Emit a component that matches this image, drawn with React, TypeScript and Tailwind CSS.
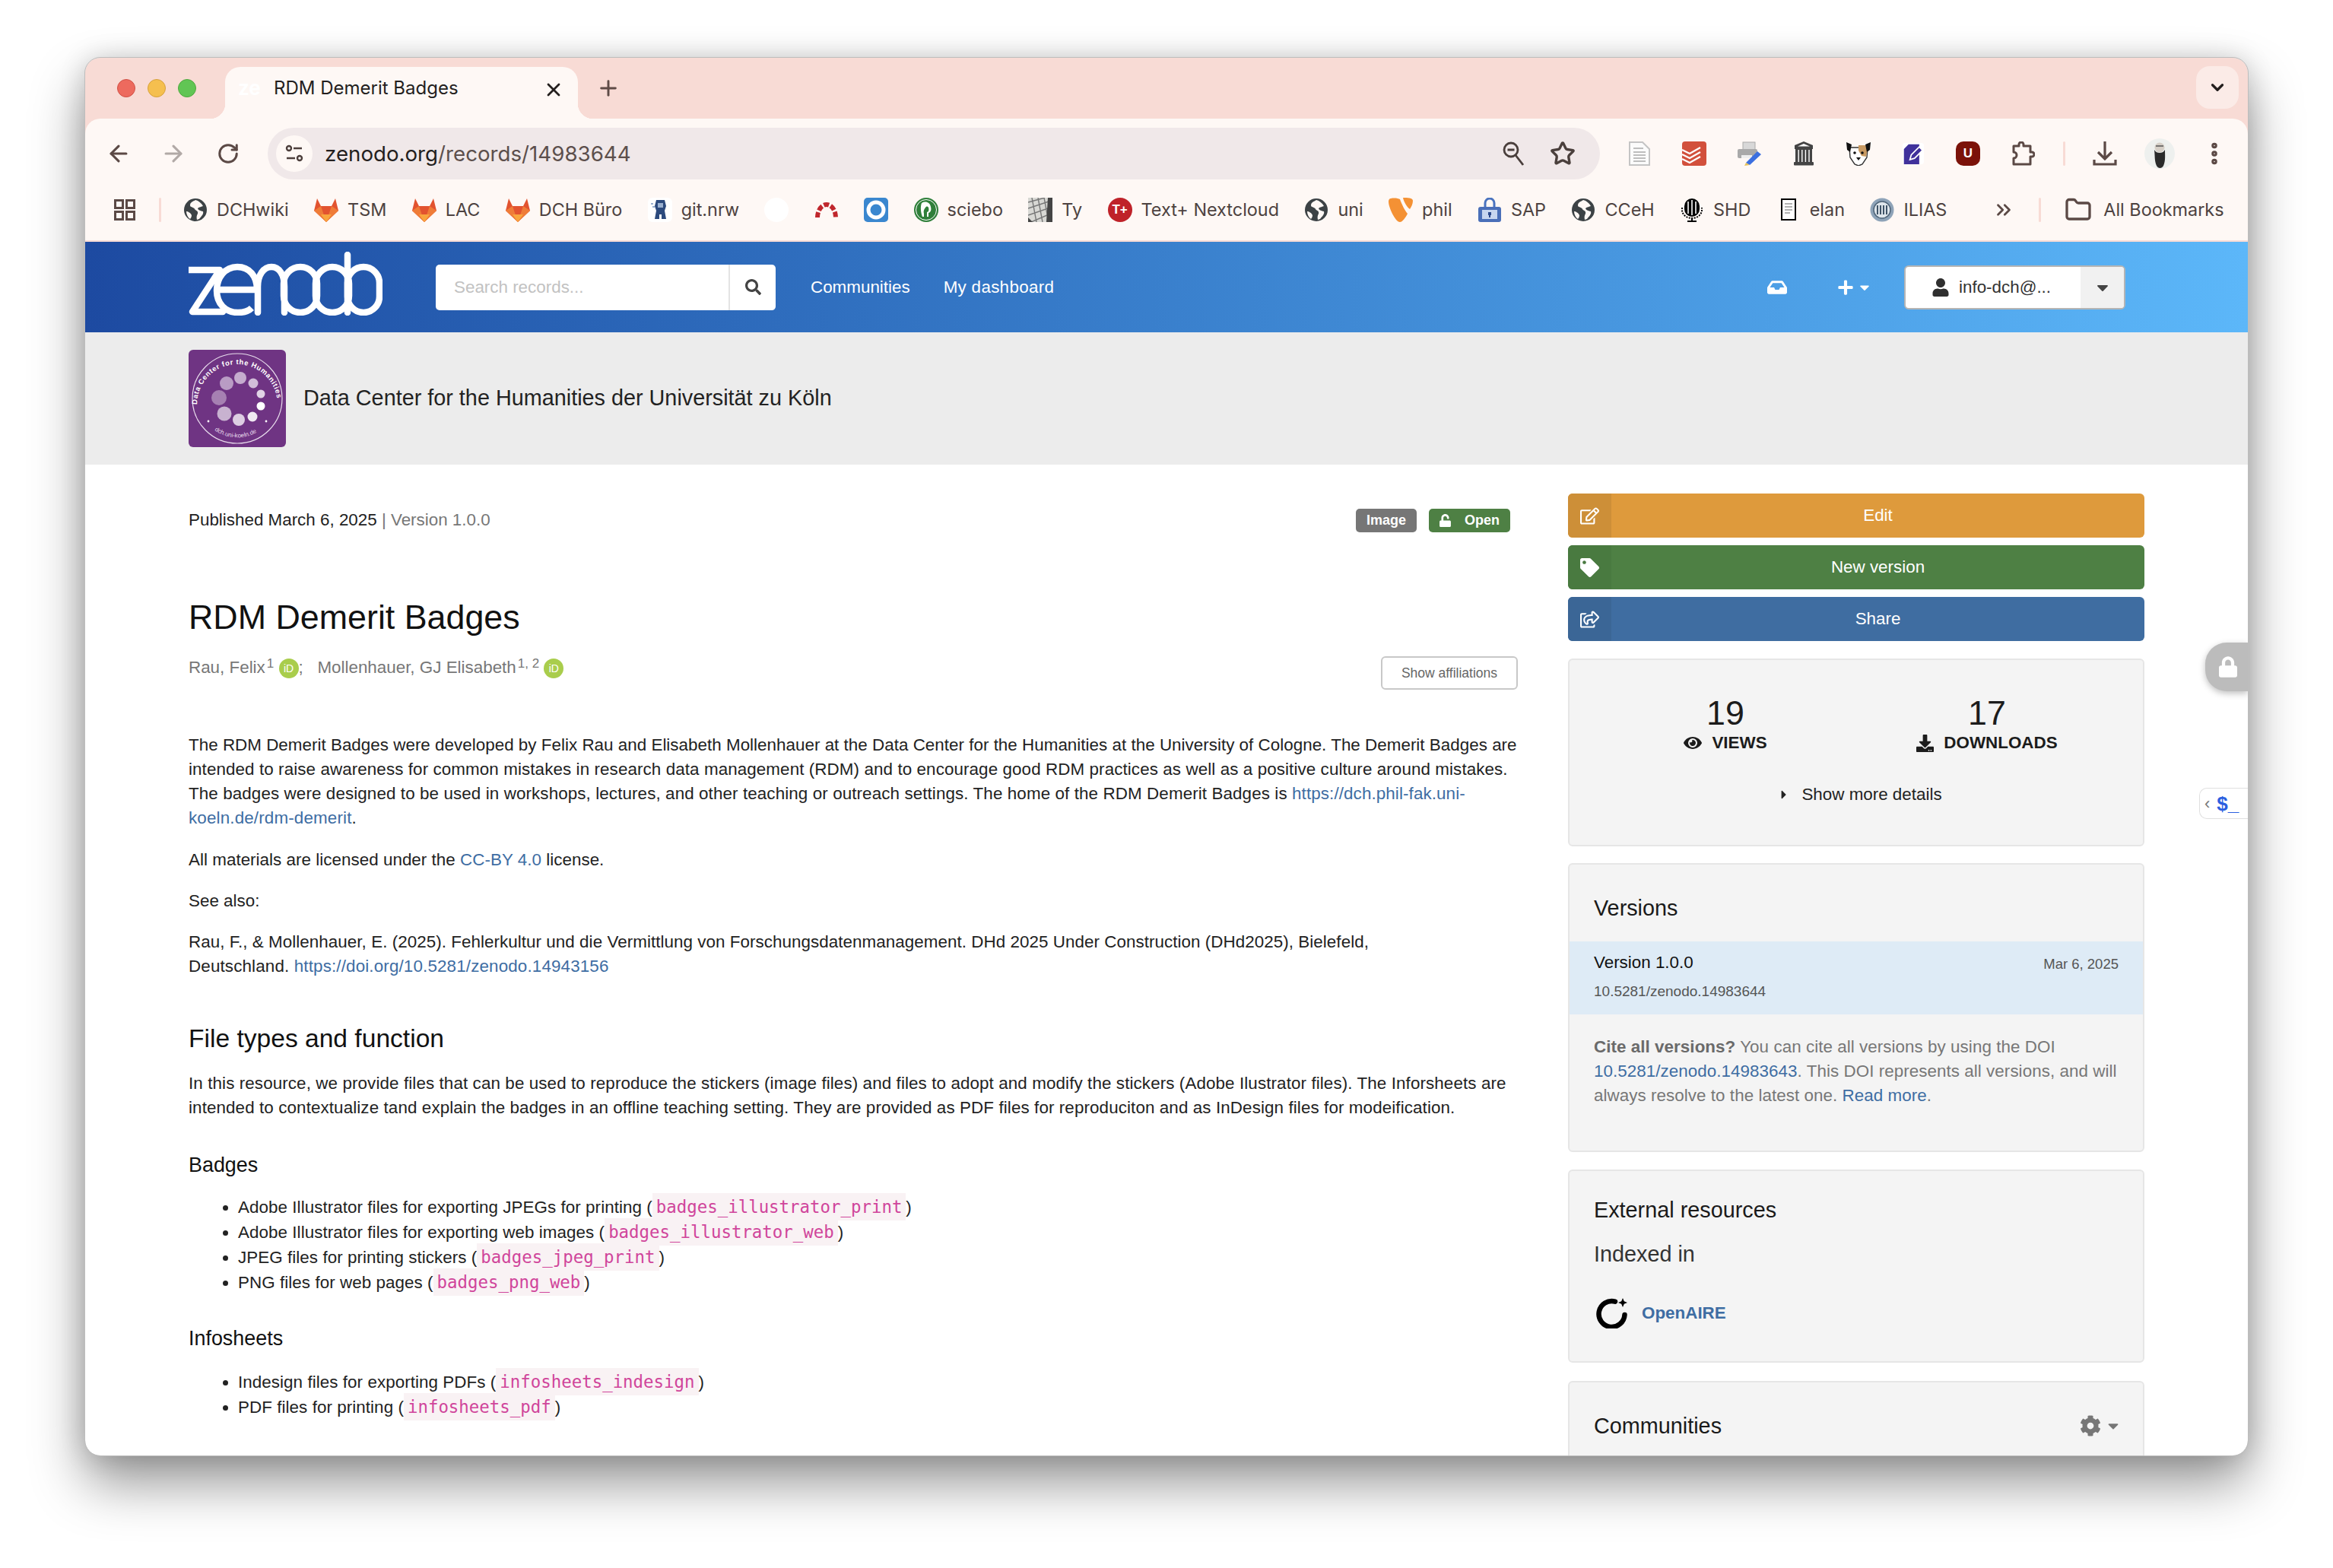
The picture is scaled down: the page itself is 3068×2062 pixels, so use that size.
import React from "react";
import { ArrowLeft, ArrowRight, RotateCw, Star, EllipsisVertical, ChevronDown, X, Plus, Folder, ChevronsRight } from "lucide-react";
import { FaRegEdit, FaTag, FaRegShareSquare, FaUnlock, FaEye, FaDownload, FaCaretRight, FaCog, FaCaretDown, FaUser, FaPlus, FaInbox, FaSearch, FaLock } from "react-icons/fa";

const Globe = () => (
  <svg viewBox="0 0 32 32" className="w-[32px] h-[32px]">
    <circle cx="16" cy="16" r="15" fill="#3c4245" />
    <path d="M16 3c-3 2-7 3-7 7 0 3 5 2 6 5 1 2 5 2 4 6-1 2-2 4-1 8l3-1c3-4 6-6 5-10-3-1-6-1-7-4 2-2 5-2 7-3-2-4-6-7-10-8zM4 18c2 0 6 2 7 5 0 2-1 4-2 5-3-2-5-6-5-10z" fill="#fef8f5" />
  </svg>
);
const Gitlab = () => (
  <svg viewBox="0 0 32 32" className="w-[32px] h-[32px]">
    <path d="M4 1l5 10h14l5-10 4 16-16 15L0 17z" fill="#e2532f" />
    <path d="M0 17l9-6 7 21z" fill="#ef7c38" />
    <path d="M32 17l-9-6-7 21z" fill="#ef7c38" />
    <path d="M9 22h14l-7 10z" fill="#f9a53d" />
  </svg>
);
const GitNrw = () => (
  <svg viewBox="0 0 32 32" className="w-[32px] h-[32px]">
    <rect width="32" height="32" rx="6" fill="#fff" />
    <path d="M11 3h11l2 8-2 6 2 11h-6v-6h-3v6H9l2-11-2-6z" fill="#2c4a7d" />
    <path d="M13 7h7v6h-7zM4 7h3v2H4zM6 11h3v2H6z" fill="#9ab0cf" />
  </svg>
);
const Arc = () => (
  <svg viewBox="0 0 32 32" className="w-[32px] h-[32px]">
    <path d="M4 26a12 17 0 0 1 24 0" fill="none" stroke="#c0272d" strokeWidth="6" strokeDasharray="7 2.5" />
  </svg>
);
const BlueO = () => (
  <svg viewBox="0 0 32 32" className="w-[32px] h-[32px]">
    <rect width="32" height="32" rx="5" fill="#3a87cf" />
    <circle cx="16" cy="16" r="10" fill="none" stroke="#fff" strokeWidth="5" />
  </svg>
);
const Sciebo = () => (
  <svg viewBox="0 0 32 32" className="w-[32px] h-[32px]">
    <circle cx="16" cy="16" r="16" fill="#2f7f3a" />
    <circle cx="16" cy="16" r="13.5" fill="none" stroke="#fff" strokeWidth="1" />
    <path d="M10 7c5-3 11-1 12 5 1 4 0 7-3 8v5h-2v-6c2 0 3-3 2-6-1-2-3-2-4 0-2 2-3 5-2 8v4h-2c-2-5-3-13-1-18z" fill="#fff" />
  </svg>
);
const Ty = () => (
  <svg viewBox="0 0 32 32" className="w-[32px] h-[32px]">
    <rect width="32" height="32" fill="#d8d8d4" />
    <path d="M0 6l22-6M0 14l30-10M0 23l32-11M4 32l28-12M5 0l6 32M13 0l6 32M21 0l6 32" stroke="#777" strokeWidth="1.4" />
    <path d="M26 0h6v32h-8z" fill="#444" />
    <path d="M0 26l6 6H0z" fill="#444" />
  </svg>
);
const TPlus = () => (
  <span className="w-[32px] h-[32px] rounded-full bg-[#bf2229] flex items-center justify-center text-white text-[17px] font-bold font-['Liberation_Sans',sans-serif] shrink-0">T+</span>
);
const Typo3 = () => (
  <svg viewBox="0 0 32 32" className="w-[32px] h-[32px]">
    <path d="M3 1c5-1 10 0 12 1 2 6 7 16 10 19-3 6-7 11-10 11C9 32 0 13 0 5c0-2 1-4 3-4zM19 0c6 0 13 0 13 4 0 4-2 8-4 11-3-2-8-9-9-15z" fill="#f49134" />
  </svg>
);
const Sap = () => (
  <svg viewBox="0 0 32 32" className="w-[32px] h-[32px]">
    <path d="M10 12V7a6 6 0 0 1 12 0v5" fill="none" stroke="#4a73bf" strokeWidth="3" />
    <rect x="1" y="12" width="30" height="20" rx="3" fill="#4a6fb8" />
    <rect x="6" y="16" width="20" height="12" fill="#c7d6ef" />
    <path d="M14 19h4v4h-1v3h-2v-3h-1z" fill="#2c4a8d" />
  </svg>
);
const Shd = () => (
  <svg viewBox="0 0 32 32" className="w-[32px] h-[32px]">
    <rect x="6" y="1" width="20" height="24" rx="10" fill="#000" />
    <path d="M11 5v16M16 3v20M21 5v16" stroke="#fff" strokeWidth="1.6" />
    <path d="M3 13v3a13 11 0 0 0 26 0v-3" fill="none" stroke="#000" strokeWidth="2" strokeDasharray="2 1.5" />
    <path d="M16 26v4M10 31h12" stroke="#000" strokeWidth="2" />
  </svg>
);
const Elan = () => (
  <svg viewBox="0 0 32 32" className="w-[32px] h-[32px]">
    <rect x="7" y="2" width="18" height="27" fill="#fff" stroke="#000" strokeWidth="2" />
    <path d="M11 8h10M11 12h10M11 16h10M11 20h7" stroke="#999" strokeWidth="1.6" />
  </svg>
);
const Ilias = () => (
  <svg viewBox="0 0 32 32" className="w-[32px] h-[32px]">
    <circle cx="16" cy="16" r="15.5" fill="#8ea3b8" />
    <circle cx="16" cy="16" r="11" fill="#dfe6ec" stroke="#4f6478" strokeWidth="1.5" />
    <path d="M10 10v12M14 10v12M18 10v12M22 10v12" stroke="#3f5367" strokeWidth="2" />
  </svg>
);

const Mark = ({ icon, label }: { icon: React.ReactNode; label?: string }) => (
  <div className="flex items-center gap-[12px] shrink-0">
    {icon}
    {label && <span className="text-[23.4px] text-[#4d4240] leading-[32px] whitespace-nowrap">{label}</span>}
  </div>
);

const ExtBox = ({ children }: { children: React.ReactNode }) => (
  <div className="w-[72px] h-[40px] flex items-center justify-center shrink-0">{children}</div>
);

const DocIcon = () => (
  <svg viewBox="0 0 28 32" className="w-[28px] h-[32px]">
    <path d="M1 1h17l9 9v21H1z" fill="#fbfbfb" stroke="#c4c4c4" strokeWidth="2" />
    <path d="M6 9h13M6 14h16M6 18h16M6 22h16M6 26h16" stroke="#aaa" strokeWidth="1.6" />
  </svg>
);
const Todoist = () => (
  <svg viewBox="0 0 32 32" className="w-[32px] h-[32px]">
    <rect width="32" height="32" rx="4" fill="#d2503c" />
    <path d="M0 11l10 5 14-8M0 17l10 5 14-8M0 23l10 5 14-8" fill="none" stroke="#fff" strokeWidth="2.4" />
  </svg>
);
const PrinterPen = () => (
  <svg viewBox="0 0 32 32" className="w-[32px] h-[32px]">
    <rect x="8" y="1" width="16" height="10" fill="#d8d8d8" stroke="#aaa" />
    <rect x="1" y="10" width="26" height="12" rx="2" fill="#a9a9a9" />
    <rect x="6" y="18" width="14" height="4" fill="#eee" />
    <path d="M12 28l15-15 5 4-15 14z" fill="#3b6fe0" />
    <path d="M12 28l5 3-7 1z" fill="#e6c25a" />
  </svg>
);
const Temple = () => (
  <svg viewBox="0 0 28 32" className="w-[28px] h-[32px]">
    <path d="M14 0L2 5v5h24V5z" fill="#444" />
    <path d="M14 3L6 6.5h16z" fill="#fff" />
    <rect x="3" y="10" width="22" height="17" fill="#444" />
    <path d="M8 11v16M12.6 11v16M17.2 11v16M21.8 11v16" stroke="#fff" strokeWidth="1.4" transform="translate(-0.8 0)" />
    <rect x="1" y="27" width="26" height="4.5" rx="1" fill="#444" />
  </svg>
);
const Dog = () => (
  <svg viewBox="0 0 32 32" className="w-[32px] h-[32px]">
    <path d="M4 8h24l-1 13-6 9-5 2-5-2-6-9z" fill="#fff" stroke="#333" strokeWidth="1.4" />
    <path d="M16 5h9l3 5-2 10-6-1-4-7z" fill="#c99a62" />
    <path d="M0 1l7 3-2 10-4-3zM32 1l-7 3 2 10 4-3z" fill="#111" />
    <circle cx="11" cy="15" r="1.8" fill="#111" />
    <circle cx="21" cy="15" r="1.8" fill="#111" />
    <path d="M13 21h6l-3 4z" fill="#111" />
  </svg>
);
const PenDoc = () => (
  <svg viewBox="0 0 32 32" className="w-[28px] h-[32px]">
    <rect width="32" height="32" rx="4" fill="#fff" />
    <path d="M9 2h16v30H2V9z" fill="#40319b" />
    <path d="M11 25l2-7L25 6l5 5-12 12z" fill="#40319b" stroke="#fff" strokeWidth="2" />
  </svg>
);
const UBlock = () => (
  <span className="w-[32px] h-[32px] bg-[#7b1209] text-white text-[17px] font-bold font-['Liberation_Sans',sans-serif] flex items-center justify-center rounded-[10px]">U</span>
);
const Avatar = () => (
  <svg viewBox="0 0 40 40" className="w-[40px] h-[40px]">
    <circle cx="20" cy="20" r="20" fill="#eef0ee" />
    <circle cx="20" cy="12" r="6.5" fill="#d6cfc7" />
    <path d="M13 15c1 8 0 14 3 21 2 4 7 4 9 0 3-7 2-13 2-21-2 3-4 4-7 4s-5-1-7-4z" fill="#2a2a2a" />
    <path d="M15 10h10" stroke="#555" strokeWidth="1.4" />
  </svg>
);
const ZoomGlass = () => (
  <svg viewBox="0 0 28 32" className="w-[28px] h-[32px]" fill="none" stroke="#4a3f3c" strokeWidth="2.8">
    <circle cx="11" cy="11" r="9" />
    <path d="M17 18l10 13M6.5 11h9" />
  </svg>
);
const PuzzleIcon = () => (
  <svg viewBox="0 0 32 32" className="w-[32px] h-[32px]" fill="none" stroke="#5b4945" strokeWidth="3" strokeLinejoin="round">
    <path d="M4 6h7V4a3 3 0 0 1 6 0v2h9v8h2a3 3 0 0 1 0 6h-2v10H4v-8a4 4 0 0 0 0-8z" />
  </svg>
);
const DownloadIcon = () => (
  <svg viewBox="0 0 32 32" className="w-[32px] h-[32px]" fill="none" stroke="#5b4945" strokeWidth="3.2">
    <path d="M16 0v23M7 14l9 9 9-9M2 24v6h28v-6" />
  </svg>
);

const ZenodoLogo = () => (
  <svg viewBox="0 0 255 84" className="w-[255px] h-[84px] shrink-0 -mt-[10px]" fill="none" stroke="#fff" strokeWidth="8.5">
    <path d="M1 24h40L5 79h40" strokeLinejoin="round" strokeLinecap="round" />
    <path d="M38 50h52c0-18-10-30-26-30s-27 14-27 31 11 29 28 29c8 0 14-2 18-6" />
    <path d="M91 80V46c0-16 8-26 18-26s17 10 17 26v34" strokeLinecap="round" />
    <rect x="125" y="20" width="44" height="60" rx="22" />
    <rect x="167" y="20" width="44" height="60" rx="22" />
    <path d="M209 4v76" strokeLinecap="round" />
    <rect x="209" y="20" width="42" height="60" rx="21" />
  </svg>
);

const DchLogo = () => (
  <svg viewBox="0 0 128 128" className="w-[128px] h-[128px] rounded-[6px] shrink-0">
    <rect width="128" height="128" fill="#6f3483" />
    <circle cx="64" cy="64" r="59" fill="none" stroke="#e8dcec" strokeWidth="1.2" />
    <defs>
      <path id="top-arc" d="M11 72a53 53 0 0 1 106 0" />
      <path id="bottom-arc" d="M24 96a51 51 0 0 0 80 0" />
    </defs>
    <text fontSize="9.4" fontWeight="700" fill="#fff" fontFamily="'Liberation Sans',sans-serif" textLength="158" lengthAdjust="spacing"><textPath href="#top-arc">Data Center for the Humanities</textPath></text>
    <text fontSize="8" fill="#e8dcec" fontFamily="'Liberation Sans',sans-serif"><textPath href="#bottom-arc" startOffset="14">dch.uni-koeln.de</textPath></text>
    <circle cx="40" cy="63" r="10" fill="#a680b2" />
    <circle cx="50" cy="44" r="9" fill="#b99cc4" />
    <circle cx="68" cy="37" r="8" fill="#c5acce" />
    <circle cx="85" cy="44" r="6.5" fill="#d1bdd8" />
    <circle cx="95" cy="58" r="5.5" fill="#e1d4e6" />
    <circle cx="95" cy="74" r="5.5" fill="#fff" />
    <circle cx="84" cy="88" r="6.5" fill="#f0e8f2" />
    <circle cx="66" cy="92" r="8" fill="#ddcde2" />
    <circle cx="47" cy="84" r="9.5" fill="#c8b2d0" />
    <circle cx="26" cy="94" r="1.4" fill="#fff" />
    <circle cx="102" cy="94" r="1.4" fill="#fff" />
  </svg>
);

const OpenAireLogo = () => (
  <svg viewBox="0 0 42 40" className="w-[42px] h-[40px] shrink-0 ml-[3px]">
    <path d="M25 4.6A17 17 0 1 0 37.5 22" fill="none" stroke="#000" strokeWidth="6.5" strokeLinecap="round" />
    <path d="M35 0l1.8 4.2L41 6l-4.2 1.8L35 12l-1.8-4.2L29 6l4.2-1.8z" fill="#000" />
  </svg>
);

const Orcid = () => (
  <span className="inline-flex w-[26px] h-[26px] rounded-full bg-[#a9cd4c] text-white text-[14px] items-center justify-center align-[1px] leading-none">iD</span>
);

const ActionBtn = ({ icon, label, main, side }: { icon: React.ReactNode; label: string; main: string; side: string }) => (
  <div className={`flex h-[58px] rounded-[6px] overflow-hidden text-white text-[22.4px] ${main}`}>
    <div className={`w-[57px] flex items-center justify-center text-[25px] ${side}`}>{icon}</div>
    <div className="flex-1 flex items-center justify-center">{label}</div>
  </div>
);

const Code = ({ children }: { children: React.ReactNode }) => (
  <code className="font-['DejaVu_Sans_Mono',monospace] text-[22.4px] tracking-normal bg-[#f9f2f4] text-[#d0459b] px-[5px] py-[5px]">{children}</code>
);

const Li = ({ children }: { children: React.ReactNode }) => (
  <li className="h-[33px] leading-[33px] list-disc tracking-[0.06px]">{children}</li>
);

const Link = ({ children }: { children: React.ReactNode }) => <span className="text-[#3e6da3]">{children}</span>;

const Card = ({ className, children }: { className: string; children: React.ReactNode }) => (
  <div className={`bg-[#f4f4f4] border-2 border-[#e6e6e6] rounded-[6px] ${className}`}>{children}</div>
);

export default function App() {
  return (
    <div className="w-[3068px] h-[2062px] bg-white pt-[76px] pl-[112px] overflow-hidden">
      <div className="relative w-[2844px] h-[1838px] rounded-[20px] overflow-hidden bg-white flex flex-col outline outline-1 outline-[#bdbdbd] shadow-[0_36px_70px_rgba(0,0,0,0.42),0_0_34px_rgba(0,0,0,0.16)]">
        {/* tab strip */}
        <div className="bg-[#f8dbd5] font-['Inter',sans-serif]">
          <div className="h-[80px] flex items-end">
            <div className="self-center flex gap-[16px] pl-[42px] -mt-[1px]">
              <span className="w-[24px] h-[24px] rounded-full bg-[#ed6a5e] border border-[#d05045]" />
              <span className="w-[24px] h-[24px] rounded-full bg-[#f5bf4f] border border-[#d6a13c]" />
              <span className="w-[24px] h-[24px] rounded-full bg-[#61c554] border border-[#4ea83f]" />
            </div>
            <div className="relative ml-[38px] w-[464px] h-[68px] bg-[#fef8f5] rounded-t-[20px] flex items-center pl-[17px] pb-[12px]">
              <span className="absolute -left-[20px] bottom-0 w-[20px] h-[20px] bg-[radial-gradient(circle_at_0_0,#f8dbd5_20px,#fef8f5_20.5px)]" />
              <span className="absolute -right-[20px] bottom-0 w-[20px] h-[20px] bg-[radial-gradient(circle_at_100%_0,#f8dbd5_20px,#fef8f5_20.5px)]" />
              <span className="w-[30px] text-[26px] text-white font-bold leading-none">ze</span>
              <span className="ml-[17px] text-[24px] leading-[32px] text-[#241f1e]">RDM Demerit Badges</span>
              <X className="absolute left-[418px] top-[16px] w-[28px] h-[28px] text-[#241f1e]" strokeWidth={2.4} />
            </div>
            <div className="self-center ml-[24px] text-[#5f4b47]"><Plus className="w-[32px] h-[32px]" strokeWidth={2.2} /></div>
            <div className="self-center ml-auto mr-[12px] mt-[-2px] w-[56px] h-[56px] rounded-[18px] bg-[#fbebe7] flex items-center justify-center">
              <ChevronDown className="w-[26px] h-[26px] text-[#241f1e]" strokeWidth={3} />
            </div>
          </div>
          {/* toolbar */}
          <div className="bg-[#fef8f5] rounded-t-[20px] border-b-2 border-[#f8dbd5]">
            <div className="h-[92px] flex items-center pl-[8px]">
              <ExtBox><ArrowLeft className="w-[34px] h-[34px] text-[#5b4945]" strokeWidth={2.2} /></ExtBox>
              <ExtBox><ArrowRight className="w-[34px] h-[34px] text-[#b1a9a6]" strokeWidth={2.2} /></ExtBox>
              <ExtBox><RotateCw className="w-[30px] h-[30px] text-[#5b4945]" strokeWidth={2.4} /></ExtBox>
              <div className="ml-[16px] w-[1752px] h-[68px] rounded-full bg-[#f0e8e9] flex items-center pl-[11px] pr-[32px]">
                <div className="w-[48px] h-[48px] rounded-full bg-[#fef8f5] flex items-center justify-center shrink-0">
                  <svg viewBox="0 0 26 26" className="w-[26px] h-[28px]" fill="none" stroke="#4d3f3c" strokeWidth="2.4">
                    <circle cx="6" cy="6" r="3" />
                    <path d="M12 6h11M3 19h11" />
                    <circle cx="20" cy="19" r="3" />
                  </svg>
                </div>
                <span className="ml-[16px] text-[27.7px] leading-[36px]"><span className="text-[#241f1e]">zenodo.org</span><span className="text-[#5c4f4c]">/records/14983644</span></span>
                <div className="ml-auto flex items-center gap-[34px]">
                  <ZoomGlass />
                  <Star className="w-[34px] h-[34px] text-[#4a3f3c]" strokeWidth={2.4} />
                </div>
              </div>
              <div className="ml-[16px] flex items-center">
                <ExtBox><DocIcon /></ExtBox>
                <ExtBox><Todoist /></ExtBox>
                <ExtBox><PrinterPen /></ExtBox>
                <ExtBox><Temple /></ExtBox>
                <ExtBox><Dog /></ExtBox>
                <ExtBox><PenDoc /></ExtBox>
                <ExtBox><UBlock /></ExtBox>
                <ExtBox><PuzzleIcon /></ExtBox>
              </div>
              <span className="ml-[17px] w-[3px] h-[32px] bg-[#f8dbd5] rounded" />
              <div className="ml-[16px] flex items-center">
                <ExtBox><DownloadIcon /></ExtBox>
                <ExtBox><Avatar /></ExtBox>
                <ExtBox><EllipsisVertical className="w-[36px] h-[36px] text-[#5b4945]" strokeWidth={3} /></ExtBox>
              </div>
            </div>
            <div className="h-[56px] mb-[12px] flex items-center pl-[38px]">
              <svg viewBox="0 0 28 28" className="w-[28px] h-[28px] shrink-0" fill="none" stroke="#5b4945" strokeWidth="3">
                <rect x="1.5" y="1.5" width="10" height="10" />
                <rect x="16.5" y="1.5" width="10" height="10" />
                <rect x="1.5" y="16.5" width="10" height="10" />
                <rect x="16.5" y="16.5" width="10" height="10" />
              </svg>
              <span className="ml-[31px] w-[3px] h-[32px] bg-[#f8dbd5] rounded shrink-0" />
              <div className="ml-[29px] flex items-center gap-[33.4px]">
                <Mark icon={<Globe />} label="DCHwiki" />
                <Mark icon={<Gitlab />} label="TSM" />
                <Mark icon={<Gitlab />} label="LAC" />
                <Mark icon={<Gitlab />} label="DCH Büro" />
                <Mark icon={<GitNrw />} label="git.nrw" />
                <Mark icon={<span className="w-[32px] h-[32px] rounded-full bg-white block" />} />
                <Mark icon={<Arc />} />
                <Mark icon={<BlueO />} />
                <Mark icon={<Sciebo />} label="sciebo" />
                <Mark icon={<Ty />} label="Ty" />
                <Mark icon={<TPlus />} label="Text+ Nextcloud" />
                <Mark icon={<Globe />} label="uni" />
                <Mark icon={<Typo3 />} label="phil" />
                <Mark icon={<Sap />} label="SAP" />
                <Mark icon={<Globe />} label="CCeH" />
                <Mark icon={<Shd />} label="SHD" />
                <Mark icon={<Elan />} label="elan" />
                <Mark icon={<Ilias />} label="ILIAS" />
              </div>
              <ChevronsRight className="ml-[60px] w-[30px] h-[30px] text-[#5b4945] shrink-0" strokeWidth={2.2} />
              <span className="ml-[31px] w-[3px] h-[32px] bg-[#f8dbd5] rounded shrink-0" />
              <div className="ml-[31px] flex items-center gap-[15px]">
                <Folder className="w-[36px] h-[36px] text-[#5b4945]" strokeWidth={2.2} />
                <span className="text-[23.4px] text-[#4d4240] whitespace-nowrap">All Bookmarks</span>
              </div>
            </div>
          </div>
        </div>

        <div className="flex-1 flex flex-col font-['Liberation_Sans',sans-serif] text-[22.4px] leading-[32px] text-[#222]">
          {/* header */}
          <div className="h-[119px] shrink-0 flex items-center pl-[136px] pr-[161px] bg-gradient-to-r from-[#1d4aa1] to-[#5cb7f9]">
            <ZenodoLogo />
            <div className="ml-[70px] w-[447px] h-[60px] bg-white rounded-[5px] flex items-center">
              <span className="flex-1 pl-[24px] text-[#c2c2c2]">Search records...</span>
              <div className="w-[62px] h-full border-l-2 border-[#e4e4e4] flex items-center justify-center text-[#444] text-[21px]"><FaSearch /></div>
            </div>
            <span className="ml-[46px] text-white">Communities</span>
            <span className="ml-[44px] text-white tracking-[0.3px]">My dashboard</span>
            <div className="ml-auto flex items-center">
              <FaInbox className="text-white w-[26px] h-[26px]" />
              <FaPlus className="ml-[66px] text-white w-[22px] h-[22px]" />
              <FaCaretDown className="ml-[4px] text-white w-[20px] h-[20px]" />
              <div className="ml-[42px] w-[291px] h-[58px] bg-white rounded-[6px] border-2 border-[#b5b5b5] flex items-center overflow-hidden text-[#333]">
                <FaUser className="ml-[34px] w-[24px] h-[24px] text-[#2f2f2f]" />
                <span className="ml-[12px] flex-1">info-dch@...</span>
                <div className="w-[57px] h-full bg-[#f1f1f1] flex items-center justify-center"><FaCaretDown className="w-[24px] h-[24px] text-[#444]" /></div>
              </div>
            </div>
          </div>
          {/* community */}
          <div className="h-[174px] shrink-0 bg-[#ececec] flex items-center pl-[136px]">
            <DchLogo />
            <span className="ml-[23px] -mt-[2px] text-[28.8px] leading-[36px] text-[#222]">Data Center for the Humanities der Universität zu Köln</span>
          </div>
          {/* main */}
          <div className="flex-1 flex pl-[136px] overflow-hidden">
            {/* left */}
            <div className="w-[1748px] shrink-0 pt-[57px]">
              <div className="flex items-center pr-[10px]">
                <span>Published March 6, 2025 <span className="text-[#777]">| Version 1.0.0</span></span>
                <span className="ml-auto h-[31px] px-[14px] rounded-[5px] bg-[#767676] text-white text-[18px] font-bold leading-[31px]">Image</span>
                <span className="ml-[16px] h-[31px] w-[107px] rounded-[5px] bg-[#4e8044] text-white text-[18px] font-bold leading-[31px] flex items-center pl-[13px]"><FaUnlock className="w-[17px] h-[17px]" /><span className="ml-[17px]">Open</span></span>
              </div>
              <h1 className="mt-[84px] text-[44.8px] leading-[54px] text-[#111] font-normal">RDM Demerit Badges</h1>
              <div className="mt-[24px] flex items-start h-[45px]">
                <span className="text-[#777] whitespace-nowrap">Rau, Felix<sup className="text-[17px] ml-[2px] -top-[7px]">1</sup> <Orcid />;&nbsp;&nbsp; Mollenhauer, GJ Elisabeth<sup className="text-[17px] ml-[2px] -top-[7px]">1, 2</sup> <Orcid /></span>
                <span className="ml-auto mt-[1px] w-[180px] h-[44px] bg-white border-2 border-[#c8c8c8] rounded-[6px] flex items-center justify-center text-[17.5px] text-[#666]">Show affiliations</span>
              </div>
              <div className="mt-[57px] whitespace-nowrap">
                <div className="tracking-[0.02px]">The RDM Demerit Badges were developed by Felix Rau and Elisabeth Mollenhauer at the Data Center for the Humanities at the University of Cologne. The Demerit Badges are</div>
                <div className="tracking-[0.09px]">intended to raise awareness for common mistakes in research data management (RDM) and to encourage good RDM practices as well as a positive culture around mistakes.</div>
                <div className="tracking-[0.1px]">The badges were designed to be used in workshops, lectures, and other teaching or outreach settings. The home of the RDM Demerit Badges is <Link>https://dch.phil-fak.uni-</Link></div>
                <div className="tracking-[0.15px]"><Link>koeln.de/rdm-demerit</Link>.</div>
              </div>
              <p className="mt-[23px] tracking-[0.03px]">All materials are licensed under the <Link>CC-BY 4.0</Link> license.</p>
              <p className="mt-[22px]">See also:</p>
              <div className="mt-[22px] whitespace-nowrap tracking-[0.05px]">
                <div>Rau, F., &amp; Mollenhauer, E. (2025). Fehlerkultur und die Vermittlung von Forschungsdatenmanagement. DHd 2025 Under Construction (DHd2025), Bielefeld,</div>
                <div className="tracking-[0.14px]">Deutschland. <Link>https://doi.org/10.5281/zenodo.14943156</Link></div>
              </div>
              <h2 className="mt-[59px] text-[33.6px] leading-[40px] text-[#111]">File types and function</h2>
              <div className="mt-[23px] whitespace-nowrap tracking-[0.1px]">
                <div>In this resource, we provide files that can be used to reproduce the stickers (image files) and files to adopt and modify the stickers (Adobe Ilustrator files). The Inforsheets are</div>
                <div>intended to contextualize tand explain the badges in an offline teaching setting. They are provided as PDF files for reproduciton and as InDesign files for modeification.</div>
              </div>
              <h3 className="mt-[43px] text-[26.9px] leading-[32px] text-[#111]">Badges</h3>
              <ul className="mt-[23px] pl-[65px]">
                <Li>Adobe Illustrator files for exporting JPEGs for printing (<Code>badges_illustrator_print</Code>)</Li>
                <Li>Adobe Illustrator files for exporting web images (<Code>badges_illustrator_web</Code>)</Li>
                <Li>JPEG files for printing stickers (<Code>badges_jpeg_print</Code>)</Li>
                <Li>PNG files for web pages (<Code>badges_png_web</Code>)</Li>
              </ul>
              <h3 className="mt-[41px] text-[26.9px] leading-[32px] text-[#111]">Infosheets</h3>
              <ul className="mt-[25px] pl-[65px]">
                <Li>Indesign files for exporting PDFs (<Code>infosheets_indesign</Code>)</Li>
                <Li>PDF files for printing (<Code>infosheets_pdf</Code>)</Li>
              </ul>
            </div>
            {/* right */}
            <div className="ml-[66px] w-[758px] shrink-0 pt-[38px]">
              <div className="flex flex-col gap-[10px]">
                <ActionBtn icon={<FaRegEdit />} label="Edit" main="bg-[#de9a3c]" side="bg-[#cd8f38]" />
                <ActionBtn icon={<FaTag />} label="New version" main="bg-[#4e8044]" side="bg-[#497a40]" />
                <ActionBtn icon={<FaRegShareSquare />} label="Share" main="bg-[#3f6da1]" side="bg-[#3b6696]" />
              </div>
              <Card className="mt-[23px] h-[247px] px-[33px]">
                <div className="grid grid-cols-2 pt-[42px] text-[#1c1c1c]">
                  <div className="flex flex-col items-center">
                    <span className="text-[44.8px] leading-[54px]">19</span>
                    <span className="flex items-center gap-[13px] font-bold leading-[26px]"><FaEye className="w-[24px] h-[24px]" />VIEWS</span>
                  </div>
                  <div className="flex flex-col items-center">
                    <span className="text-[44.8px] leading-[54px]">17</span>
                    <span className="flex items-center gap-[13px] font-bold leading-[26px]"><FaDownload className="w-[23px] h-[23px]" />DOWNLOADS</span>
                  </div>
                </div>
                <div className="mt-[39px] flex items-center justify-center pl-[10px]">
                  <FaCaretRight className="w-[16px] h-[18px] text-[#222]" />
                  <span className="ml-[15px]">Show more details</span>
                </div>
              </Card>
              <Card className="mt-[22px] h-[380px]">
                <div className="pt-[40px] pb-[27px] px-[32px] text-[28.8px] leading-[34px] text-[#1a1a1a]">Versions</div>
                <div className="h-[96px] bg-[#deebf6] px-[32px] pt-[12px]">
                  <div className="flex justify-between">
                    <span className="text-[#111]">Version 1.0.0</span>
                    <span className="text-[18.5px] text-[#555] mt-[2px]">Mar 6, 2025</span>
                  </div>
                  <div className="mt-[7px] text-[19px] leading-[26px] text-[#555]">10.5281/zenodo.14983644</div>
                </div>
                <div className="pt-[27px] px-[32px] text-[#777] whitespace-nowrap tracking-[0.05px]">
                  <div><b className="text-[#6a6a6a]">Cite all versions?</b> You can cite all versions by using the DOI</div>
                  <div><Link>10.5281/zenodo.14983643</Link>. This DOI represents all versions, and will</div>
                  <div>always resolve to the latest one. <Link>Read more</Link>.</div>
                </div>
              </Card>
              <Card className="mt-[23px] h-[254px] px-[32px]">
                <div className="pt-[34px] text-[28.8px] leading-[34px] text-[#1a1a1a]">External resources</div>
                <div className="mt-[21px] text-[28.8px] leading-[40px] text-[#333]">Indexed in</div>
                <div className="mt-[38px] flex items-center gap-[18px]">
                  <OpenAireLogo />
                  <span className="font-bold text-[#3e6da3]">OpenAIRE</span>
                </div>
              </Card>
              <Card className="mt-[24px] h-[200px] px-[32px]">
                <div className="pt-[40px] flex items-center justify-between text-[28.8px] leading-[34px] text-[#1a1a1a]">
                  <span>Communities</span>
                  <span className="flex items-center gap-[5px] text-[#767676] -mr-[4px]"><FaCog className="w-[28px] h-[28px]" /><FaCaretDown className="w-[22px] h-[22px]" /></span>
                </div>
              </Card>
            </div>
          </div>
        </div>
        {/* floating tabs */}
        <div className="absolute right-0 top-[769px] w-[56px] h-[64px] rounded-l-[28px] bg-[#bcbcbc] shadow-[0_3px_8px_rgba(0,0,0,0.25)] flex items-center justify-center text-white pl-[4px]"><FaLock className="w-[24px] h-[28px]" /></div>
        <div className="absolute right-0 top-[960px] w-[64px] h-[41px] rounded-l-[10px] bg-white border border-r-0 border-[#e0e0e0] flex items-center pl-[6px] font-['Liberation_Sans',sans-serif] font-bold text-[26px] text-[#2c5fe0] leading-none"><span className="text-[#777] font-normal text-[22px] mr-[9px]">‹</span>$_</div>
      </div>
    </div>
  );
}
